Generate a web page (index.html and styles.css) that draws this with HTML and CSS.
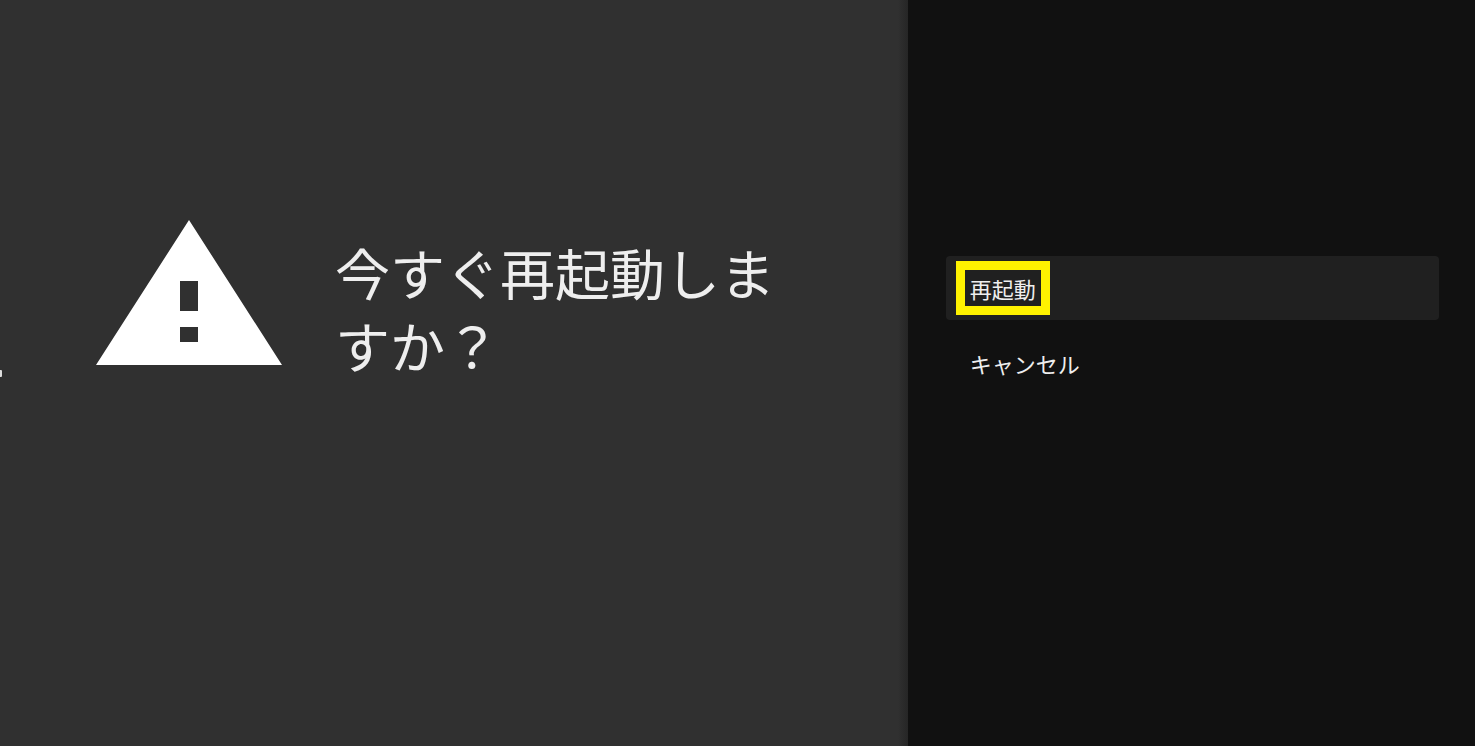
FILE: index.html
```html
<!DOCTYPE html>
<html lang="ja">
<head>
  <meta charset="UTF-8">
  <title>再起動</title>
  <link rel="stylesheet" href="styles.css">
</head>
<body>
  <main class="message">
    <span class="edge-mark"></span>
    <svg class="warning" viewBox="0 0 186 145" aria-hidden="true">
      <path fill="#fff" fill-rule="evenodd" d="M93 0L186 145H0ZM84 61V91H102V61ZM84 107V122H102V107Z"/>
    </svg>
    <h1>今すぐ再起動しますか？</h1>
  </main>

  <aside class="actions">
    <button class="action selected" type="button"><span class="highlight">再起動</span></button>
    <button class="action" type="button">キャンセル</button>
  </aside>
</body>
</html>
```
FILE: styles.css
```css
* {
  box-sizing: border-box;
}

body {
  margin: 0;
  min-height: 100vh;
  display: grid;
  grid-template-columns: 8fr 5fr;
  background: #111;
  color: #eee;
  font-family: "Noto Sans CJK JP", sans-serif;
}

.message {
  position: relative;
  display: flex;
  align-items: flex-start;
  gap: 53px;
  padding: 220px 96px 0;
  background: linear-gradient(to left, #262626, #303030 10px);
}

/* end of the previous pane, cut off by the screen edge */
.edge-mark {
  position: absolute;
  left: 0;
  top: 370px;
  width: 2px;
  height: 7px;
  border-radius: 0 1px 1px 0;
  background: #ddd;
}

.warning {
  flex: none;
  width: 186px;
}

h1 {
  margin: 15px 0 0;
  font-size: 55px;
  font-weight: 400;
  line-height: 73px;
}

.actions {
  display: flex;
  flex-direction: column;
  gap: 11px;
  padding: 256px 36px 0 38px;
}

.action {
  height: 64px;
  padding: 0 24px;
  border: none;
  border-radius: 4px;
  background: none;
  color: inherit;
  font: inherit;
  font-size: 22px;
  text-align: left;
}

.selected {
  padding: 0 10px;
  background: #202020;
}

.highlight {
  display: inline-block;
  padding: 0 5px;
  border: 9px solid #fff200;
  line-height: 36px;
}
```
